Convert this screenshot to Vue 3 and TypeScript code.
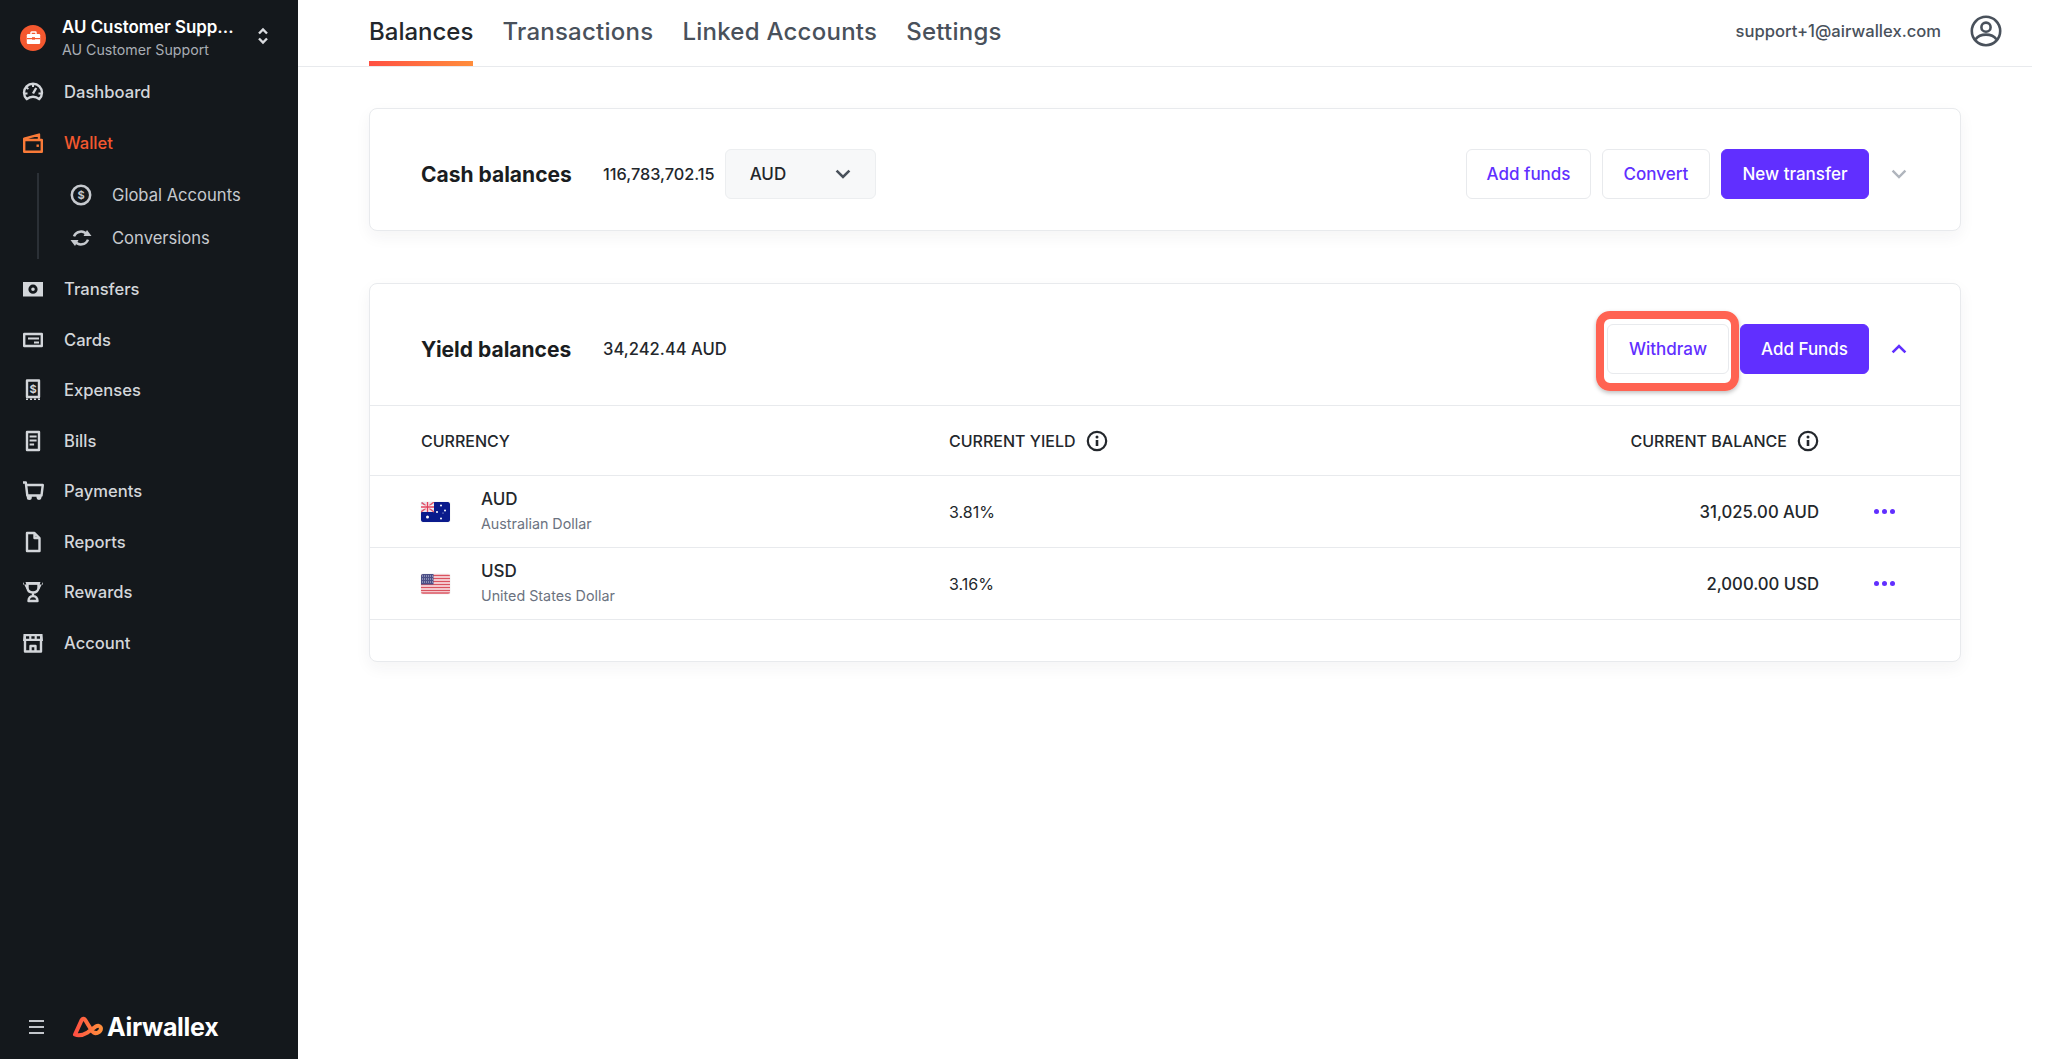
<template>
  <div class="app">
    <aside class="sidebar">
      <div class="org">
        <span class="org-badge">
          <svg width="15" height="14" viewBox="0 0 15 14" fill="none">
            <path d="M5 3V1.6C5 1.2 5.3 1 5.6 1h3.8c.3 0 .6.2.6.6V3" stroke="#fff" stroke-width="1.4" />
            <rect x="0.8" y="3" width="13.4" height="10" rx="1.2" fill="#fff" />
            <path d="M1 7.6h13" stroke="#f4582f" stroke-width="1.2" />
            <path d="M6 7.4h3" stroke="#f4582f" stroke-width="2.4" />
          </svg>
        </span>
        <div class="org-names">
          <div class="org-title">AU Customer Supp...</div>
          <div class="org-sub">AU Customer Support</div>
        </div>
        <svg class="org-switch" width="12" height="18" viewBox="0 0 12 18" fill="none">
          <path d="M2 6.5 6 2.5l4 4M2 11.5l4 4 4-4" stroke="#d9dbdf" stroke-width="2.4" />
        </svg>
      </div>

      <nav class="nav">
        <template v-for="item in nav" :key="item.label">
          <a class="nav-item" :class="{ active: item.active }">
            <svg class="nav-icon" width="24" height="24" viewBox="0 0 24 24" fill="none">
              <path v-if="item.d" :d="item.d" stroke="currentColor" stroke-width="2.4" stroke-linejoin="round" />
              <path v-if="item.solid" :d="item.solid" fill="currentColor" fill-rule="evenodd" />
              <text v-if="item.glyph" x="12" y="15" class="icon-glyph">{{ item.glyph }}</text>
            </svg>
            <span>{{ item.label }}</span>
          </a>
          <div v-if="item.children" class="subnav">
            <a v-for="child in item.children" :key="child.label" class="sub-item">
              <svg class="nav-icon" width="24" height="24" viewBox="0 0 24 24" fill="none">
                <path v-if="child.d" :d="child.d" stroke="currentColor" stroke-width="2.5" />
                <path v-if="child.solid" :d="child.solid" fill="currentColor" />
                <text v-if="child.glyph" x="12" y="16" class="icon-glyph">{{ child.glyph }}</text>
              </svg>
              <span>{{ child.label }}</span>
            </a>
          </div>
        </template>
      </nav>

      <div class="side-foot">
        <span class="burger"><i></i><i></i><i></i></span>
        <svg class="logo-mark" width="32" height="22" viewBox="0 0 32 22" fill="none">
          <defs>
            <linearGradient id="logoGrad" x1="0" y1="0" x2="1" y2="0">
              <stop offset="0" stop-color="#ff4f42" />
              <stop offset="1" stop-color="#ff8e3c" />
            </linearGradient>
          </defs>
          <path
            d="M3 18.5 9.6 4.2Q11.4 1.4 13.4 4.2L19.6 14.4Q22 18 25.6 16.8 29.6 15 28.8 11.6 27.4 8.6 23.6 10.6L15.6 16.4Q8 20.8 3 18.5Z"
            stroke="url(#logoGrad)"
            stroke-width="4"
            stroke-linejoin="round"
          />
        </svg>
        <span class="wordmark">Airwallex</span>
      </div>
    </aside>

    <main class="main">
      <header class="topbar">
        <div class="tabs">
          <a v-for="tab in tabs" :key="tab" class="tab" :class="{ current: tab === 'Balances' }">{{ tab }}</a>
        </div>
        <div class="user">
          <span class="email">support+1@airwallex.com</span>
          <svg width="32" height="32" viewBox="0 0 32 32" fill="none" stroke="#49515b" stroke-width="2.6">
            <circle cx="16" cy="16" r="14.2" />
            <circle cx="16" cy="12.2" r="4.6" />
            <path d="M5.6 24.2C8 20.8 11.6 19.6 16 19.6s8 1.2 10.4 4.6" />
          </svg>
        </div>
      </header>

      <section class="content">
        <div class="card">
          <div class="card-head">
            <h2 class="card-title">Cash balances</h2>
            <span class="amount">116,783,702.15</span>
            <div class="select">
              <span>AUD</span>
              <svg width="16" height="10" viewBox="0 0 16 10" fill="none">
                <path d="M1.6 1.6 8 8l6.4-6.4" stroke="#49515b" stroke-width="2.6" />
              </svg>
            </div>
            <div class="actions">
              <button type="button" class="btn">Add funds</button>
              <button type="button" class="btn convert">Convert</button>
              <button type="button" class="btn primary">New transfer</button>
              <svg class="toggle" width="16" height="10" viewBox="0 0 16 10" fill="none">
                <path d="M1.6 1.6 8 8l6.4-6.4" stroke="#b0b5bd" stroke-width="2.4" />
              </svg>
            </div>
          </div>
        </div>

        <div class="card yield">
          <div class="card-head">
            <h2 class="card-title">Yield balances</h2>
            <span class="amount wide">34,242.44 AUD</span>
            <div class="actions">
              <button type="button" class="btn withdraw">
                Withdraw
                <span class="highlight"></span>
              </button>
              <button type="button" class="btn primary add">Add Funds</button>
              <svg class="toggle" width="16" height="10" viewBox="0 0 16 10" fill="none">
                <path d="M1.6 8.4 8 2l6.4 6.4" stroke="#612fff" stroke-width="2.6" />
              </svg>
            </div>
          </div>

          <div class="row table-head">
            <span>CURRENCY</span>
            <span class="with-info">CURRENT YIELD
              <svg width="22" height="22" viewBox="0 0 22 22" fill="none">
                <circle cx="11" cy="11" r="9.2" stroke="#23272c" stroke-width="2.2" />
                <circle cx="11" cy="6.9" r="1.5" fill="#23272c" />
                <path d="M11 10v6" stroke="#23272c" stroke-width="2.6" />
              </svg>
            </span>
            <span class="with-info end">CURRENT BALANCE
              <svg width="22" height="22" viewBox="0 0 22 22" fill="none">
                <circle cx="11" cy="11" r="9.2" stroke="#23272c" stroke-width="2.2" />
                <circle cx="11" cy="6.9" r="1.5" fill="#23272c" />
                <path d="M11 10v6" stroke="#23272c" stroke-width="2.6" />
              </svg>
            </span>
            <span></span>
          </div>

          <div v-for="row in rows" :key="row.code" class="row body-row">
            <div class="currency">
              <svg v-if="row.code === 'AUD'" class="flag" width="29" height="20" viewBox="0 0 29 20">
                <rect width="29" height="20" rx="1.5" fill="#0a1a8c" />
                <rect width="13" height="10" fill="#e8e4ef" />
                <path d="M0 0l13 10M13 0 0 10" stroke="#e0576b" stroke-width="1.4" />
                <path d="M6.5 0v10M0 5h13" stroke="#fff" stroke-width="3" />
                <path d="M6.5 0v10M0 5h13" stroke="#e0405c" stroke-width="1.6" />
                <g fill="#fff">
                  <circle cx="6.5" cy="15" r="1.5" />
                  <circle cx="20" cy="3.5" r="1" />
                  <circle cx="16" cy="10" r="1" />
                  <circle cx="24" cy="8.5" r="1" />
                  <circle cx="20" cy="16.5" r="1" />
                  <circle cx="22" cy="11" r="0.5" />
                </g>
              </svg>
              <svg v-else class="flag" width="29" height="20" viewBox="0 0 29 20">
                <rect width="29" height="20" rx="1.5" fill="#fbeef0" />
                <path
                  d="M0 1.5h29M0 4.5h29M0 7.5h29M0 10.5h29M0 13.5h29M0 16.5h29M0 19h29"
                  stroke="#d9535f"
                  stroke-width="1.5"
                />
                <rect width="12.5" height="10.5" fill="#4b4f86" />
                <path d="M1 2h11M1 5h11M1 8h11" stroke="#c9cbe0" stroke-width="1" stroke-dasharray="1 1" />
              </svg>
              <div class="currency-text">
                <div class="code">{{ row.code }}</div>
                <div class="name">{{ row.name }}</div>
              </div>
            </div>
            <span class="rate">{{ row.rate }}</span>
            <span class="balance">{{ row.balance }}</span>
            <span class="dots"><i></i><i></i><i></i></span>
          </div>
        </div>
      </section>
    </main>
  </div>
</template>

<script setup lang="ts">
interface SubItem {
  label: string;
  d?: string;
  solid?: string;
  glyph?: string;
}

interface NavItem extends SubItem {
  active?: boolean;
  children?: SubItem[];
}

const nav: NavItem[] = [
  {
    label: "Dashboard",
    d: "M5.8 19.2a9 9 0 1 1 12.4 0C16.4 17.6 14.4 16.8 12 16.8s-4.4.8-6.2 2.4ZM12 13.5l3.2-5.5",
    solid: "M11 4h2v3h-2ZM4.5 8l1.2-1.5 2.3 1.8-1.2 1.5ZM3.5 12.5h3v2h-3ZM17.5 12.5h3v2h-3Z",
  },
  {
    label: "Wallet",
    active: true,
    d: "M3.2 9h17.6v11.8H3.2zM3.2 9V7.6L18 3.6V9",
    solid: "M15.5 13.5h2.4v2.4h-2.4z",
    children: [
      {
        label: "Global Accounts",
        d: "M12 2.8a9.2 9.2 0 1 0 0 18.4 9.2 9.2 0 0 0 0-18.4Z",
        glyph: "$",
      },
      {
        label: "Conversions",
        d: "M5 10.4A7.4 7.4 0 0 1 18 8.8M19 13.6A7.4 7.4 0 0 1 6 15.2",
        solid: "M14.5 10h8L18 4ZM9.5 14h-8L6 20Z",
      },
    ],
  },
  {
    label: "Transfers",
    solid:
      "M2 5h20v14.5H2ZM12 7.6a4.6 4.6 0 1 0 0 9.2 4.6 4.6 0 0 0 0-9.2ZM12 10.4a1.8 1.8 0 1 1 0 3.6 1.8 1.8 0 0 1 0-3.6Z",
  },
  {
    label: "Cards",
    d: "M3.2 6h17.6v12H3.2z",
    solid: "M7 9.6h11v2H7ZM13 13.4h5v2h-5Z",
  },
  {
    label: "Expenses",
    d: "M6 2.5h12v16.5H6z",
    glyph: "$",
    solid: "M5 20.4h2v1.6H5ZM9 20.4h2v1.6H9ZM13 20.4h2v1.6h-2ZM17 20.4h2v1.6h-2Z",
  },
  {
    label: "Bills",
    d: "M6 3h12v18H6z",
    solid: "M8.6 6.5h7v2h-7ZM8.6 10.5h7v2h-7ZM8.6 14.5h4.5v2H8.6Z",
  },
  {
    label: "Payments",
    d: "M2 3.5h2.8l1.5 13h14.2l1.3-10.5H5.4",
    solid: "M5.8 16h5v2.4a2.5 2.5 0 0 1-5 0ZM15.5 16h5v2.4a2.5 2.5 0 0 1-5 0Z",
  },
  {
    label: "Reports",
    d: "M6 3h7.5L18.5 8v13H6zM13.5 3v5h5",
  },
  {
    label: "Rewards",
    d: "M6.5 3.5h11v4c0 3.4-2.4 5-5.5 5s-5.5-1.6-5.5-5ZM12 12.5v3M7.5 21c0-3 2-5 4.5-5s4.5 2 4.5 5Z",
    solid: "M2 2h20v2.4H2ZM2 2h2.5l2.5 7H5.5ZM19.5 2H22l-3.5 7H17Z",
  },
  {
    label: "Account",
    d: "M4 10v10.5h16V10M9.5 20.5v-5.5h5v5.5",
    solid: "M2.5 3h19L22 10H2ZM5 5.2v2.6h3.2V5.2ZM10.4 5.2v2.6h3.2V5.2ZM15.8 5.2v2.6H19V5.2Z",
  },
];

const tabs = ["Balances", "Transactions", "Linked Accounts", "Settings"];

const rows = [
  { code: "AUD", name: "Australian Dollar", rate: "3.81%", balance: "31,025.00 AUD" },
  { code: "USD", name: "United States Dollar", rate: "3.16%", balance: "2,000.00 USD" },
];
</script>

<style>
body {
  margin: 0;
  background: #fff;
}
</style>

<style scoped>
.app {
  display: flex;
  height: 1059px;
  overflow: hidden;
  font-family: Inter, "Liberation Sans", sans-serif;
  color: #23272c;
}

.sidebar {
  display: flex;
  flex-direction: column;
  flex: 0 0 298px;
  background: #14181c;
  color: #d3d6da;
}

.org {
  display: flex;
  align-items: center;
  height: 67px;
  padding: 8px 0 0 20px;
  box-sizing: border-box;
}

.org-badge {
  display: flex;
  align-items: center;
  justify-content: center;
  width: 26px;
  height: 26px;
  border-radius: 50%;
  background: #f4582f;
}

.org-names {
  margin-left: 16px;
  width: 196px;
  white-space: nowrap;
}

.org-title {
  color: #fff;
  font-size: 16.9px;
  font-weight: 600;
  line-height: 24px;
}

.org-sub {
  color: #a8adb4;
  font-size: 14.2px;
  line-height: 22px;
}

.org-switch {
  margin-top: -3px;
  margin-left: -1px;
}

.nav-item {
  display: flex;
  align-items: center;
  height: 50.5px;
  padding-left: 21px;
  font-size: 16.6px;
  font-weight: 500;
  gap: 19px;
}

.nav-item.active {
  color: #f4582f;
}

.nav-item.active .nav-icon {
  color: #f97a38;
}

.subnav {
  margin: 5px 0 5px 37px;
  padding-left: 30px;
  border-left: 2px solid #2b3036;
}

.sub-item {
  display: flex;
  align-items: center;
  height: 43px;
  gap: 19px;
  font-size: 16.6px;
  color: #c6c9ce;
}

.icon-glyph {
  font-size: 11px;
  font-weight: 700;
  text-anchor: middle;
  fill: currentColor;
}

.side-foot {
  display: flex;
  align-items: center;
  margin-top: auto;
  height: 64px;
  padding-left: 29px;
}

.burger {
  display: flex;
  flex-direction: column;
  gap: 4px;
  width: 15px;
}

.burger i {
  height: 2px;
  background: #c3c6cb;
}

.logo-mark {
  margin-left: 28px;
}

.wordmark {
  margin-left: 3px;
  color: #fff;
  font-size: 25px;
  font-weight: 700;
  letter-spacing: -0.3px;
}

.main {
  flex: 1;
  min-width: 0;
  padding-right: 16px;
}

.topbar {
  display: flex;
  align-items: flex-start;
  justify-content: space-between;
  height: 67px;
  box-sizing: border-box;
  padding: 0 30px 0 71px;
  border-bottom: 1px solid #e8eaed;
}

.tabs {
  display: flex;
  gap: 29px;
}

.tab {
  display: block;
  height: 66px;
  box-sizing: border-box;
  padding-top: 17px;
  color: #49515b;
  font-size: 24px;
  font-weight: 500;
  line-height: 29px;
  letter-spacing: 0.25px;
}

.tab.current {
  color: #23272c;
  letter-spacing: 0;
  border-bottom: 5px solid;
  border-image: linear-gradient(90deg, #ff4f42, #ff8e3c) 1;
}

.user {
  display: flex;
  align-items: center;
  gap: 29px;
  height: 62px;
}

.email {
  color: #49515b;
  font-size: 16.6px;
  font-weight: 500;
}

.content {
  padding: 41px 71px 0;
}

.card {
  background: #fff;
  border: 1px solid #e8eaed;
  border-radius: 8px;
  box-shadow: 0 6px 16px rgba(30, 40, 60, 0.05);
}

.yield {
  margin-top: 52px;
}

.card-head {
  display: flex;
  align-items: center;
  padding: 40px 53px 31px 51px;
}

.card-title {
  margin: 0;
  width: 182px;
  font-size: 21px;
  font-weight: 700;
  color: #1a1d21;
}

.amount {
  font-size: 16.3px;
  font-weight: 500;
}

.amount.wide {
  font-size: 16.6px;
}

.select {
  display: flex;
  align-items: center;
  justify-content: space-between;
  box-sizing: border-box;
  width: 151px;
  height: 50px;
  margin-left: 10px;
  padding: 0 24px;
  background: #f7f8f9;
  border: 1px solid #eceef0;
  border-radius: 6px;
  font-size: 17px;
  font-weight: 500;
}

.actions {
  display: flex;
  align-items: center;
  gap: 11px;
  margin-left: auto;
}

.btn {
  position: relative;
  height: 50px;
  padding: 0;
  width: 125px;
  background: #fff;
  border: 1px solid #e8eaed;
  border-radius: 6px;
  color: #612fff;
  font-family: inherit;
  font-size: 17px;
  font-weight: 500;
}

.convert {
  width: 108px;
}

.primary {
  width: 148px;
  background: #612fff;
  border-color: #612fff;
  color: #fff;
}

.withdraw {
  width: 122px;
}

.add {
  width: 129px;
}

.highlight {
  position: absolute;
  inset: -14px -11px -18px -12px;
  border: 8px solid #ff6352;
  border-radius: 14px;
  box-shadow: 0 2px 4px rgba(0, 0, 0, 0.25);
  pointer-events: none;
}

.toggle {
  margin-left: 11px;
}

.row {
  display: grid;
  grid-template-columns: 528px 1fr 260px 141px;
  align-items: center;
  padding-left: 51px;
  border-top: 1px solid #e8eaed;
}

.table-head {
  height: 70px;
  box-sizing: border-box;
  font-size: 16px;
  font-weight: 500;
}

.with-info {
  display: flex;
  align-items: center;
  gap: 10px;
}

.end {
  justify-content: flex-end;
}

.body-row {
  height: 72px;
  box-sizing: border-box;
}

.body-row:last-child {
  border-bottom: 1px solid #e8eaed;
  height: 73px;
  margin-bottom: 41px;
}

.currency {
  display: flex;
  align-items: center;
  gap: 31px;
}

.currency-text {
  margin-top: -2px;
}

.flag {
  box-shadow: 0 0 1px rgba(0, 0, 0, 0.3);
  border-radius: 2px;
}

.code {
  font-size: 17px;
  font-weight: 500;
  line-height: 24px;
}

.name {
  margin-top: 3px;
  color: #6b7280;
  font-size: 14.3px;
  line-height: 20px;
}

.rate {
  font-size: 16px;
}

.balance {
  text-align: right;
  font-size: 16.7px;
  font-weight: 500;
}

.dots {
  display: flex;
  gap: 3px;
  padding-left: 55px;
}

.dots i {
  width: 5px;
  height: 5px;
  border-radius: 50%;
  background: #612fff;
}
</style>
